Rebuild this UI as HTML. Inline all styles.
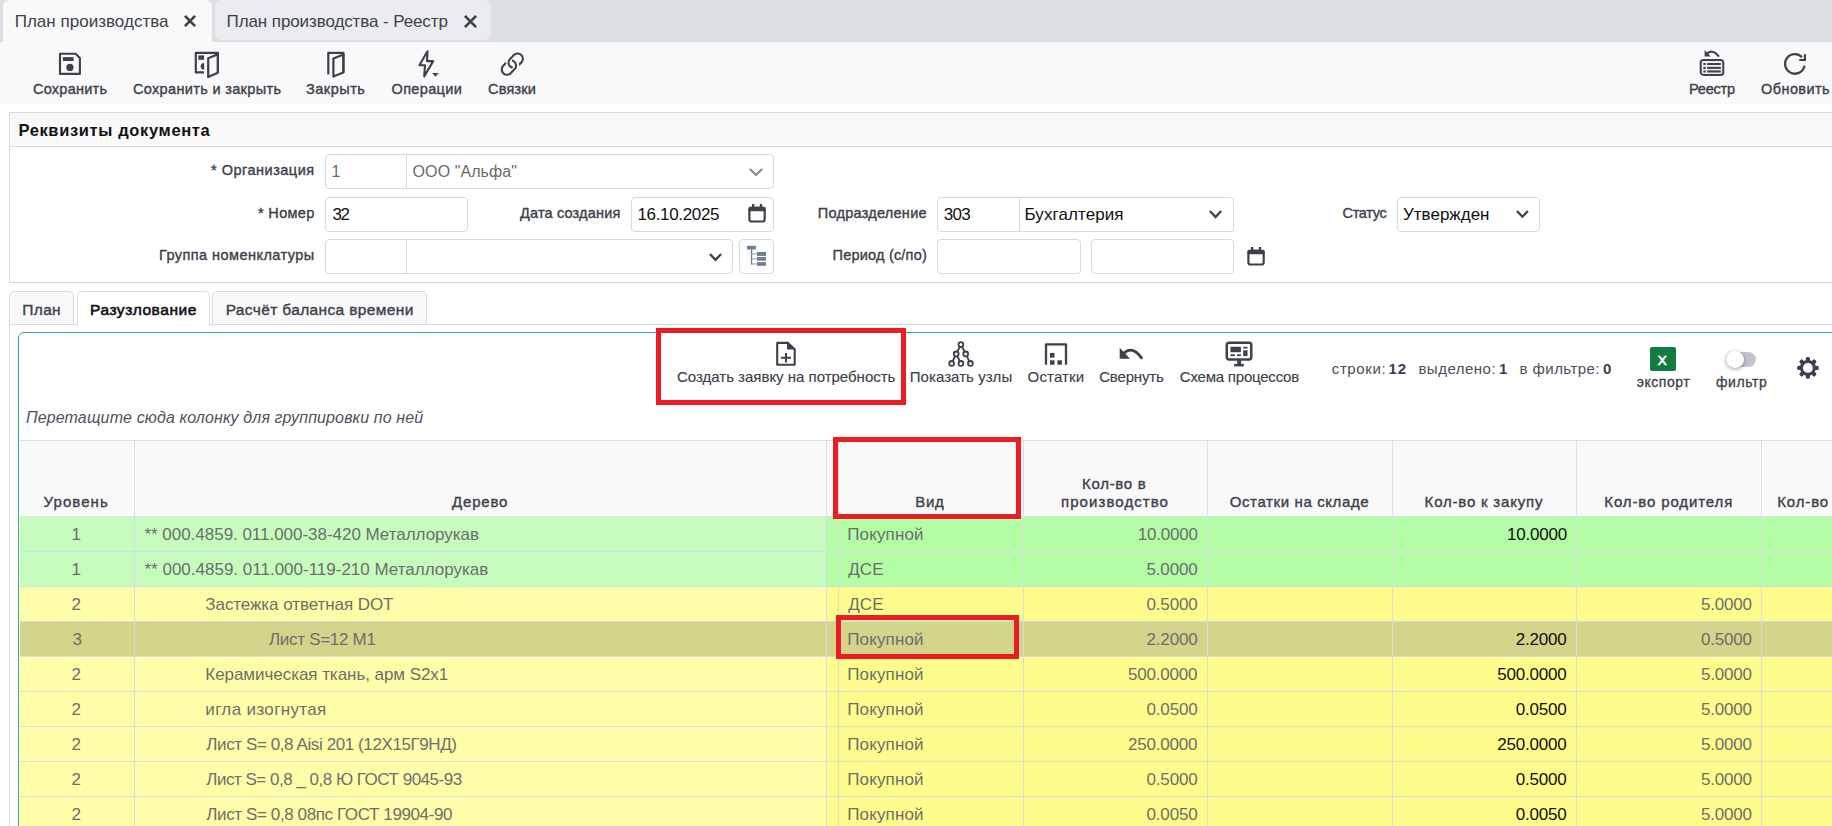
<!DOCTYPE html>
<html><head><meta charset="utf-8"><style>
html,body{margin:0;padding:0}
body{width:1832px;height:826px;overflow:hidden;position:relative;background:#fff;font-family:"Liberation Sans",sans-serif}
.t{position:absolute;white-space:nowrap}
svg{display:block}
</style></head><body>
<div style="position:absolute;left:0px;top:0px;width:1832px;height:42px;background:#dcdfe3"></div>
<div style="position:absolute;left:3px;top:0px;width:209px;height:42px;background:#f9f9f9;border-radius:6px 6px 0 0"></div>
<div class="t" style="left:14.70px;top:12.61px;font-size:17px;line-height:17px;font-weight:400;color:#3c414c;font-style:normal;letter-spacing:0.019px;">План производства</div>
<div style="position:absolute;left:215px;top:0px;width:276px;height:40px;background:#eaecf0;border-radius:6px"></div>
<div class="t" style="left:226.60px;top:12.61px;font-size:17px;line-height:17px;font-weight:400;color:#3c414c;font-style:normal;letter-spacing:-0.104px;">План производства - Реестр</div>
<svg style="position:absolute;left:182px;top:13px" width="16" height="16" viewBox="0 0 16 16"><path d="M2.9 2.9 L13.1 13.1 M13.1 2.9 L2.9 13.1" stroke="#3c414c" stroke-width="2.7" fill="none"/></svg>
<svg style="position:absolute;left:462px;top:13px" width="17" height="17" viewBox="0 0 17 17"><path d="M2.9 2.9 L14.1 14.1 M14.1 2.9 L2.9 14.1" stroke="#3c414c" stroke-width="2.7" fill="none"/></svg>
<div style="position:absolute;left:0px;top:42px;width:1832px;height:62px;background:#f9f9f9"></div>
<div class="t" style="left:33.00px;top:81.73px;font-size:14.5px;line-height:14.5px;font-weight:400;color:#3c414c;font-style:normal;letter-spacing:0.250px;-webkit-text-stroke:0.38px #3c414c;">Сохранить</div>
<div class="t" style="left:133.00px;top:81.73px;font-size:14.5px;line-height:14.5px;font-weight:400;color:#3c414c;font-style:normal;letter-spacing:0.333px;-webkit-text-stroke:0.38px #3c414c;">Сохранить и закрыть</div>
<div class="t" style="left:306.00px;top:81.73px;font-size:14.5px;line-height:14.5px;font-weight:400;color:#3c414c;font-style:normal;letter-spacing:0.500px;-webkit-text-stroke:0.38px #3c414c;">Закрыть</div>
<div class="t" style="left:391.50px;top:81.73px;font-size:14.5px;line-height:14.5px;font-weight:400;color:#3c414c;font-style:normal;letter-spacing:0.357px;-webkit-text-stroke:0.38px #3c414c;">Операции</div>
<div class="t" style="left:488.00px;top:81.73px;font-size:14.5px;line-height:14.5px;font-weight:400;color:#3c414c;font-style:normal;letter-spacing:0.200px;-webkit-text-stroke:0.38px #3c414c;">Связки</div>
<div class="t" style="left:1689.00px;top:81.73px;font-size:14.5px;line-height:14.5px;font-weight:400;color:#3c414c;font-style:normal;letter-spacing:-0.200px;-webkit-text-stroke:0.38px #3c414c;">Реестр</div>
<div class="t" style="left:1761.00px;top:81.73px;font-size:14.5px;line-height:14.5px;font-weight:400;color:#3c414c;font-style:normal;letter-spacing:0.429px;-webkit-text-stroke:0.38px #3c414c;">Обновить</div>
<svg style="position:absolute;left:54px;top:48px" width="32" height="32" viewBox="0 0 32 32"><path d="M6 5.8 H21.6 L25.9 10.1 V25.9 H6 Z" stroke="#3c414c" stroke-width="2.1" fill="none" stroke-linejoin="round"/><rect x="8.9" y="9.1" width="10.7" height="3.9" fill="#3c414c"/><circle cx="15.9" cy="19.4" r="3.6" fill="#3c414c"/></svg>
<svg style="position:absolute;left:190px;top:48px" width="32" height="32" viewBox="0 0 32 32"><path d="M14.1 24.4 H5.8 V4.8 H27.9 V24.8" stroke="#3c414c" stroke-width="2.2" fill="none" stroke-linejoin="round"/><path d="M18.2 29 V10.2 L27.9 6.2 V24.8 Z" stroke="#3c414c" stroke-width="2.2" fill="none" stroke-linejoin="round"/><rect x="8.3" y="7.4" width="5.8" height="4.4" fill="#3c414c"/><path d="M14.1 14.9 A3.4 3.4 0 0 0 14.1 21.7 Z" fill="#3c414c"/></svg>
<svg style="position:absolute;left:320px;top:48px" width="32" height="32" viewBox="0 0 32 32"><path d="M8.3 26.6 V4.8 H23.4 V24.4" stroke="#3c414c" stroke-width="2.2" fill="none" stroke-linejoin="round"/><path d="M13.4 28.6 V10.5 L23.4 6.4 V24.4 Z" stroke="#3c414c" stroke-width="2.2" fill="none" stroke-linejoin="round"/></svg>
<svg style="position:absolute;left:412px;top:48px" width="32" height="32" viewBox="0 0 32 32"><path d="M15.5 3.2 L7.4 17.2 H13 L12.2 28.4 L21.2 13.1 H15 Z" stroke="#3c414c" stroke-width="2.1" fill="none" stroke-linejoin="round"/><path d="M20.2 25 H26.7 L23.45 28.7 Z" fill="#3c414c"/></svg>
<svg style="position:absolute;left:496px;top:48px" width="32" height="32" viewBox="0 0 32 32"><g transform="translate(-0.52,0.37) scale(2.1)" fill="#3c414c"><path d="M4.715 6.542 3.343 7.914a3 3 0 1 0 4.243 4.243l1.828-1.829A3 3 0 0 0 8.586 5.5L8 6.086a1 1 0 0 0-.154.199 2 2 0 0 1 .861 3.337L6.88 11.45a2 2 0 1 1-2.83-2.83l.793-.792a4 4 0 0 1-.128-1.287z"/><path d="M6.586 4.672A3 3 0 0 0 7.414 9.5l.775-.776a2 2 0 0 1-.896-3.346L9.12 3.55a2 2 0 1 1 2.83 2.83l-.793.792c.112.42.155.855.128 1.287l1.372-1.372a3 3 0 1 0-4.243-4.243z"/><circle cx="4.7" cy="7.2" r="0.52"/><circle cx="8.293" cy="5.793" r="0.5"/><circle cx="7.8" cy="9.11" r="0.5"/><circle cx="11.95" cy="7.1" r="0.52"/></g></svg>
<svg style="position:absolute;left:1696px;top:46px" width="32" height="32" viewBox="0 0 32 32"><rect x="4.75" y="14.05" width="22.5" height="14.9" rx="2.8" stroke="#3c414c" stroke-width="2.1" fill="none"/><rect x="5.8" y="15.1" width="20.4" height="12.8" fill="#dfe0e3" opacity="0.55"/><g fill="#3c414c"><rect x="7.4" y="17" width="2.3" height="2"/><rect x="7.4" y="20.9" width="2.3" height="2"/><rect x="7.4" y="24.4" width="2.3" height="2.1"/><rect x="11.2" y="17" width="13.6" height="2"/><rect x="11.2" y="20.9" width="13.6" height="2"/><rect x="11.2" y="24.4" width="13.6" height="2.1"/><path d="M8.6 3.9 V10.5 H14.7 Z"/></g><path d="M10.5 8.2 Q16 2.5 22.4 9.9" stroke="#3c414c" stroke-width="2.2" fill="none" stroke-linecap="round"/></svg>
<svg style="position:absolute;left:1779px;top:48px" width="32" height="32" viewBox="0 0 32 32"><path d="M25.55 17.60 A9.8 9.8 0 1 1 22.95 9.09" stroke="#3c414c" stroke-width="2.3" fill="none"/><path d="M20.2 10.9 H24.8 V6.2 H27 V13.1 H20.2 Z" fill="#3c414c"/></svg>
<div style="position:absolute;left:9px;top:112px;width:1831px;height:171px;border:1px solid #d5d9e3;box-sizing:border-box;background:#fff"></div>
<div style="position:absolute;left:10px;top:113px;width:1830px;height:33px;background:#f9f9f9"></div>
<div style="position:absolute;left:10px;top:146px;width:1830px;height:1px;background:#d5d9e3"></div>
<div class="t" style="left:18.40px;top:121.63px;font-size:16.5px;line-height:16.5px;font-weight:700;color:#111;font-style:normal;letter-spacing:0.644px;">Реквизиты документа</div>
<div class="t" style="left:211.00px;top:162.93px;font-size:14.5px;line-height:14.5px;font-weight:400;color:#3c414c;font-style:normal;letter-spacing:0.500px;-webkit-text-stroke:0.38px #3c414c;">* Организация</div>
<div class="t" style="left:258.00px;top:205.83px;font-size:14.5px;line-height:14.5px;font-weight:400;color:#3c414c;font-style:normal;letter-spacing:0.333px;-webkit-text-stroke:0.38px #3c414c;">* Номер</div>
<div class="t" style="left:159.00px;top:247.73px;font-size:14.5px;line-height:14.5px;font-weight:400;color:#3c414c;font-style:normal;letter-spacing:0.444px;-webkit-text-stroke:0.38px #3c414c;">Группа номенклатуры</div>
<div class="t" style="left:520.00px;top:205.83px;font-size:14.5px;line-height:14.5px;font-weight:400;color:#3c414c;font-style:normal;letter-spacing:0.167px;-webkit-text-stroke:0.38px #3c414c;">Дата создания</div>
<div class="t" style="left:817.80px;top:205.83px;font-size:14.5px;line-height:14.5px;font-weight:400;color:#3c414c;font-style:normal;letter-spacing:0.258px;-webkit-text-stroke:0.38px #3c414c;">Подразделение</div>
<div class="t" style="left:832.60px;top:248.13px;font-size:14.5px;line-height:14.5px;font-weight:400;color:#3c414c;font-style:normal;letter-spacing:0.200px;-webkit-text-stroke:0.38px #3c414c;">Период (с/по)</div>
<div class="t" style="left:1342.50px;top:205.83px;font-size:14.5px;line-height:14.5px;font-weight:400;color:#3c414c;font-style:normal;letter-spacing:-0.300px;-webkit-text-stroke:0.38px #3c414c;">Статус</div>
<div style="position:absolute;left:325px;top:154px;width:449px;height:35px;border:1px solid #d5d9e3;border-radius:4px;box-sizing:border-box;background:#fff"></div><div style="position:absolute;left:406px;top:155px;width:1px;height:33px;background:#d5d9e3"></div>
<div class="t" style="left:331.50px;top:164.16px;font-size:16px;line-height:16px;font-weight:400;color:#6a6a6a;font-style:normal;letter-spacing:0.000px;">1</div>
<div class="t" style="left:412.60px;top:164.16px;font-size:16px;line-height:16px;font-weight:400;color:#6a6a6a;font-style:normal;letter-spacing:0.080px;">ООО "Альфа"</div>
<svg style="position:absolute;left:747px;top:166px" width="18" height="12" viewBox="0 0 18 12"><path d="M2.9 3 L9.0 8.8 L15.1 3" stroke="#8a8d93" stroke-width="2.3" fill="none"/></svg>
<div style="position:absolute;left:325px;top:197px;width:143px;height:35px;border:1px solid #d5d9e3;border-radius:4px;box-sizing:border-box;background:#fff"></div>
<div class="t" style="left:332.50px;top:205.61px;font-size:17px;line-height:17px;font-weight:400;color:#111;font-style:normal;letter-spacing:-1.500px;">32</div>
<div style="position:absolute;left:631px;top:197px;width:143px;height:35px;border:1px solid #d5d9e3;border-radius:4px;box-sizing:border-box;background:#fff"></div>
<div class="t" style="left:637.40px;top:205.61px;font-size:17px;line-height:17px;font-weight:400;color:#111;font-style:normal;letter-spacing:-0.322px;">16.10.2025</div>
<svg style="position:absolute;left:740px;top:198px" width="32" height="32" viewBox="0 0 32 32"><rect x="9.4" y="9.8" width="15.3" height="13.7" rx="2.3" stroke="#3c414c" stroke-width="2.2" fill="none"/><rect x="8.3" y="8.7" width="17.5" height="4.5" rx="2" fill="#3c414c"/><rect x="12" y="6" width="2.3" height="4" fill="#3c414c"/><rect x="19.8" y="6" width="2.3" height="4" fill="#3c414c"/></svg>
<div style="position:absolute;left:325px;top:239px;width:408px;height:35px;border:1px solid #d5d9e3;border-radius:4px;box-sizing:border-box;background:#fff"></div><div style="position:absolute;left:406px;top:240px;width:1px;height:33px;background:#d5d9e3"></div>
<svg style="position:absolute;left:706.6px;top:250.7px" width="17.0" height="12.100000000000023" viewBox="0 0 17.0 12.100000000000023"><path d="M2.9 3 L8.5 8.900000000000023 L14.1 3" stroke="#3c414c" stroke-width="2.3" fill="none"/></svg>
<div style="position:absolute;left:739px;top:239px;width:35px;height:35px;border:1px solid #d5d9e3;border-radius:4px;box-sizing:border-box;background:#fff"></div>
<svg style="position:absolute;left:740px;top:240px" width="32" height="32" viewBox="0 0 32 32"><g fill="#6b7f96"><rect x="7" y="5.8" width="8.9" height="3.7"/><rect x="10.9" y="9" width="1.3" height="15.6"/><rect x="12" y="13.3" width="5" height="1.2" opacity="0.6"/><rect x="12" y="18.3" width="5" height="1.2" opacity="0.6"/><rect x="12" y="23.3" width="5" height="1.3" opacity="0.6"/><rect x="17" y="12" width="9" height="3.9"/><rect x="17" y="17" width="9" height="3.7"/><rect x="17" y="22.1" width="9" height="3.7"/></g></svg>
<div style="position:absolute;left:937px;top:197px;width:297px;height:35px;border:1px solid #d5d9e3;border-radius:4px;box-sizing:border-box;background:#fff"></div><div style="position:absolute;left:1019px;top:198px;width:1px;height:33px;background:#d5d9e3"></div>
<div class="t" style="left:943.80px;top:205.61px;font-size:17px;line-height:17px;font-weight:400;color:#111;font-style:normal;letter-spacing:-0.750px;">303</div>
<div class="t" style="left:1024.50px;top:205.61px;font-size:17px;line-height:17px;font-weight:400;color:#111;font-style:normal;letter-spacing:0.080px;">Бухгалтерия</div>
<svg style="position:absolute;left:1206.5px;top:208px" width="17.09999999999991" height="12.199999999999989" viewBox="0 0 17.09999999999991 12.199999999999989"><path d="M2.9 3 L8.549999999999955 8.99999999999999 L14.199999999999909 3" stroke="#3c414c" stroke-width="2.3" fill="none"/></svg>
<div style="position:absolute;left:937px;top:239px;width:144px;height:35px;border:1px solid #d5d9e3;border-radius:4px;box-sizing:border-box;background:#fff"></div>
<div style="position:absolute;left:1091px;top:239px;width:143px;height:35px;border:1px solid #d5d9e3;border-radius:4px;box-sizing:border-box;background:#fff"></div>
<svg style="position:absolute;left:1239px;top:241px" width="32" height="32" viewBox="0 0 32 32"><rect x="9.4" y="9.8" width="15.3" height="13.7" rx="2.3" stroke="#3c414c" stroke-width="2.2" fill="none"/><rect x="8.3" y="8.7" width="17.5" height="4.5" rx="2" fill="#3c414c"/><rect x="12" y="6" width="2.3" height="4" fill="#3c414c"/><rect x="19.8" y="6" width="2.3" height="4" fill="#3c414c"/></svg>
<div style="position:absolute;left:1397px;top:197px;width:143px;height:35px;border:1px solid #d5d9e3;border-radius:4px;box-sizing:border-box;background:#fff"></div>
<div class="t" style="left:1403.00px;top:205.61px;font-size:17px;line-height:17px;font-weight:400;color:#111;font-style:normal;letter-spacing:0.000px;">Утвержден</div>
<svg style="position:absolute;left:1513.5px;top:208.3px" width="16.799999999999955" height="11.899999999999977" viewBox="0 0 16.799999999999955 11.899999999999977"><path d="M2.9 3 L8.399999999999977 8.699999999999978 L13.899999999999954 3" stroke="#3c414c" stroke-width="2.3" fill="none"/></svg>
<div style="position:absolute;left:9px;top:324px;width:1px;height:502px;background:#d5d9e3"></div>
<div style="position:absolute;left:9px;top:291px;width:65px;height:34px;border:1px solid #d5d9e3;border-radius:5px 5px 0 0;box-sizing:border-box;background:#f9f9f9"></div>
<div style="position:absolute;left:212px;top:291px;width:215px;height:34px;border:1px solid #d5d9e3;border-radius:5px 5px 0 0;box-sizing:border-box;background:#f9f9f9"></div>
<div style="position:absolute;left:9px;top:324px;width:1831px;height:1px;background:#d5d9e3"></div>
<div style="position:absolute;left:77px;top:291px;width:133px;height:35px;border:1px solid #d5d9e3;border-bottom:none;border-radius:5px 5px 0 0;box-sizing:border-box;background:#fff"></div>
<div class="t" style="left:22.30px;top:302.08px;font-size:15.5px;line-height:15.5px;font-weight:400;color:#3c414c;font-style:normal;letter-spacing:0.333px;-webkit-text-stroke:0.38px #3c414c;">План</div>
<div class="t" style="left:90.00px;top:302.48px;font-size:15.5px;line-height:15.5px;font-weight:400;color:#111;font-style:normal;letter-spacing:0.555px;-webkit-text-stroke:0.6px #111;">Разузлование</div>
<div class="t" style="left:225.70px;top:302.08px;font-size:15.5px;line-height:15.5px;font-weight:400;color:#3c414c;font-style:normal;letter-spacing:0.357px;-webkit-text-stroke:0.38px #3c414c;">Расчёт баланса времени</div>
<div style="position:absolute;left:18px;top:332px;width:1832px;height:568px;border:1.4px solid #2db36b;border-radius:6px;box-sizing:border-box;background:#fff"></div>
<div class="t" style="left:677.00px;top:369.30px;font-size:15px;line-height:15px;font-weight:400;color:#3c414c;font-style:normal;letter-spacing:-0.007px;-webkit-text-stroke:0.15px #3c414c;">Создать заявку на потребность</div>
<div class="t" style="left:909.70px;top:369.30px;font-size:15px;line-height:15px;font-weight:400;color:#3c414c;font-style:normal;letter-spacing:0.067px;-webkit-text-stroke:0.15px #3c414c;">Показать узлы</div>
<div class="t" style="left:1027.60px;top:369.30px;font-size:15px;line-height:15px;font-weight:400;color:#3c414c;font-style:normal;letter-spacing:0.150px;-webkit-text-stroke:0.15px #3c414c;">Остатки</div>
<div class="t" style="left:1099.20px;top:369.30px;font-size:15px;line-height:15px;font-weight:400;color:#3c414c;font-style:normal;letter-spacing:-0.171px;-webkit-text-stroke:0.15px #3c414c;">Свернуть</div>
<div class="t" style="left:1179.80px;top:369.30px;font-size:15px;line-height:15px;font-weight:400;color:#3c414c;font-style:normal;letter-spacing:-0.214px;-webkit-text-stroke:0.15px #3c414c;">Схема процессов</div>
<svg style="position:absolute;left:770px;top:338px" width="32" height="32" viewBox="0 0 32 32"><path d="M7.2 4.9 H18 L24.7 11.2 V26.7 H7.2 Z" stroke="#3c414c" stroke-width="2.1" fill="none" stroke-linejoin="round"/><path d="M17 4.5 L25.8 11.6 H17 Z" fill="#3c414c"/><path d="M16 14.9 V24.6 M11 19.7 H20.9" stroke="#3c414c" stroke-width="2.1"/></svg>
<svg style="position:absolute;left:944px;top:338px" width="32" height="32" viewBox="0 0 32 32"><path d="M15.82 8.74 L13.28 13.76" stroke="#3c414c" stroke-width="1.8"/><path d="M18.00 8.73 L20.60 13.77" stroke="#3c414c" stroke-width="1.8"/><path d="M11.15 18.06 L8.65 23.24" stroke="#3c414c" stroke-width="1.8"/><path d="M13.26 18.05 L15.84 23.25" stroke="#3c414c" stroke-width="1.8"/><path d="M22.76 18.05 L25.34 23.25" stroke="#3c414c" stroke-width="1.8"/><circle cx="16.9" cy="6.6" r="2.4" stroke="#3c414c" stroke-width="1.8" fill="none"/><circle cx="12.2" cy="15.9" r="2.4" stroke="#3c414c" stroke-width="1.8" fill="none"/><circle cx="21.7" cy="15.9" r="2.4" stroke="#3c414c" stroke-width="1.8" fill="none"/><circle cx="7.6" cy="25.4" r="2.4" stroke="#3c414c" stroke-width="1.8" fill="none"/><circle cx="16.9" cy="25.4" r="2.4" stroke="#3c414c" stroke-width="1.8" fill="none"/><circle cx="26.4" cy="25.4" r="2.4" stroke="#3c414c" stroke-width="1.8" fill="none"/></svg>
<svg style="position:absolute;left:1040px;top:338px" width="32" height="32" viewBox="0 0 32 32"><path d="M6 26.7 V6.4 H26 V26.7" stroke="#3c414c" stroke-width="2.3" fill="none" stroke-linejoin="round"/><g fill="#3c414c"><rect x="10" y="14.9" width="4.5" height="4.7"/><rect x="10" y="22.3" width="4.5" height="4.4"/><rect x="17.4" y="22.3" width="4.5" height="4.4"/></g></svg>
<svg style="position:absolute;left:1116px;top:338px" width="32" height="32" viewBox="0 0 32 32"><path d="M3.7 9.7 V20.7 H14 Z" fill="#3c414c"/><path d="M7.5 15.5 Q16 7 25.5 19.8" stroke="#3c414c" stroke-width="2.8" fill="none" stroke-linecap="round"/></svg>
<svg style="position:absolute;left:1222px;top:338px" width="34" height="34" viewBox="0 0 34 34"><rect x="4.75" y="4.75" width="24.5" height="16.8" rx="2.2" stroke="#3c414c" stroke-width="2.5" fill="none"/><g fill="#3c414c"><rect x="15.2" y="22" width="3.9" height="4.2"/><rect x="12.1" y="25.9" width="9.7" height="2.5"/><rect x="8.4" y="8.8" width="10.5" height="5.4"/><rect x="21.2" y="8.8" width="4.3" height="1.7"/><rect x="21.2" y="12.3" width="4.3" height="5.8"/><rect x="8.4" y="16.3" width="4.4" height="1.8"/><rect x="15" y="16.3" width="3.9" height="1.8"/></g></svg>
<div class="t" style="left:1331.80px;top:361.10px;font-size:15px;line-height:15px;font-weight:400;color:#4a4f59;font-style:normal;letter-spacing:0.600px;">строки:</div>
<div class="t" style="left:1388.60px;top:361.10px;font-size:15px;line-height:15px;font-weight:700;color:#3c414c;font-style:normal;letter-spacing:0.900px;">12</div>
<div class="t" style="left:1418.40px;top:361.10px;font-size:15px;line-height:15px;font-weight:400;color:#4a4f59;font-style:normal;letter-spacing:0.500px;">выделено:</div>
<div class="t" style="left:1499.00px;top:361.10px;font-size:15px;line-height:15px;font-weight:700;color:#3c414c;font-style:normal;letter-spacing:0.000px;">1</div>
<div class="t" style="left:1519.60px;top:361.10px;font-size:15px;line-height:15px;font-weight:400;color:#4a4f59;font-style:normal;letter-spacing:0.422px;">в фильтре:</div>
<div class="t" style="left:1603.00px;top:361.10px;font-size:15px;line-height:15px;font-weight:700;color:#3c414c;font-style:normal;letter-spacing:0.000px;">0</div>
<div style="position:absolute;left:1650px;top:346.5px;width:25.5px;height:24.69999999999999px;background:#107c41;border-radius:2px"></div>
<div class="t" style="left:1657.80px;top:353.57px;font-size:13.5px;line-height:13.5px;font-weight:400;color:#fff;font-style:normal;letter-spacing:0.000px;-webkit-text-stroke:0.7px #fff;">X</div>
<div class="t" style="left:1636.80px;top:375.45px;font-size:14px;line-height:14px;font-weight:400;color:#3c414c;font-style:normal;letter-spacing:0.533px;-webkit-text-stroke:0.3px #3c414c;">экспорт</div>
<div style="position:absolute;left:1726px;top:352px;width:30px;height:14.5px;background:#c2c5cb;border-radius:8px"></div>
<div style="position:absolute;left:1725.5px;top:350.6px;width:18.5px;height:17.399999999999977px;background:#fff;border-radius:50%;box-shadow:0 1px 4px rgba(0,0,0,0.4)"></div>
<div class="t" style="left:1716.00px;top:375.45px;font-size:14px;line-height:14px;font-weight:400;color:#3c414c;font-style:normal;letter-spacing:0.600px;-webkit-text-stroke:0.3px #3c414c;">фильтр</div>
<svg style="position:absolute;left:1792px;top:352px" width="32" height="32" viewBox="0 0 32 32"><g fill="#3c414c"><rect x="13.8" y="5.1" width="4.2" height="5" rx="1.6" transform="rotate(0 15.9 15.9)"/><rect x="13.8" y="5.1" width="4.2" height="5" rx="1.6" transform="rotate(45 15.9 15.9)"/><rect x="13.8" y="5.1" width="4.2" height="5" rx="1.6" transform="rotate(90 15.9 15.9)"/><rect x="13.8" y="5.1" width="4.2" height="5" rx="1.6" transform="rotate(135 15.9 15.9)"/><rect x="13.8" y="5.1" width="4.2" height="5" rx="1.6" transform="rotate(180 15.9 15.9)"/><rect x="13.8" y="5.1" width="4.2" height="5" rx="1.6" transform="rotate(225 15.9 15.9)"/><rect x="13.8" y="5.1" width="4.2" height="5" rx="1.6" transform="rotate(270 15.9 15.9)"/><rect x="13.8" y="5.1" width="4.2" height="5" rx="1.6" transform="rotate(315 15.9 15.9)"/></g><circle cx="15.9" cy="15.9" r="6.45" stroke="#3c414c" stroke-width="3" fill="none"/></svg>
<div class="t" style="left:26.00px;top:410.16px;font-size:16px;line-height:16px;font-weight:400;color:#4f535c;font-style:italic;letter-spacing:0.120px;">Перетащите сюда колонку для группировки по ней</div>
<div style="position:absolute;left:656px;top:328px;width:250px;height:77px;border:5px solid #ec1c24;box-sizing:border-box"></div>
<div style="position:absolute;left:19.5px;top:440px;width:1812.5px;height:76px;background:#f9f9f9"></div>
<div style="position:absolute;left:19.5px;top:440px;width:1812.5px;height:1px;background:#dcdfe8"></div>
<div style="position:absolute;left:19.5px;top:516px;width:1812.5px;height:1px;background:#dcdfe8"></div>
<div style="position:absolute;left:134.0px;top:441px;width:1.0px;height:75px;background:#dcdfe8"></div>
<div style="position:absolute;left:826.0px;top:441px;width:1.0px;height:75px;background:#dcdfe8"></div>
<div style="position:absolute;left:838.0px;top:441px;width:1.0px;height:75px;background:#dcdfe8"></div>
<div style="position:absolute;left:1023.0px;top:441px;width:1.0px;height:75px;background:#dcdfe8"></div>
<div style="position:absolute;left:1207.0px;top:441px;width:1.0px;height:75px;background:#dcdfe8"></div>
<div style="position:absolute;left:1392.0px;top:441px;width:1.0px;height:75px;background:#dcdfe8"></div>
<div style="position:absolute;left:1576.0px;top:441px;width:1.0px;height:75px;background:#dcdfe8"></div>
<div style="position:absolute;left:1761.0px;top:441px;width:1.0px;height:75px;background:#dcdfe8"></div>
<div class="t" style="left:43.60px;top:494.10px;font-size:15px;line-height:15px;font-weight:400;color:#3c414c;font-style:normal;letter-spacing:1.067px;-webkit-text-stroke:0.38px #3c414c;">Уровень</div>
<div class="t" style="left:452.00px;top:494.10px;font-size:15px;line-height:15px;font-weight:400;color:#3c414c;font-style:normal;letter-spacing:0.820px;-webkit-text-stroke:0.38px #3c414c;">Дерево</div>
<div class="t" style="left:915.30px;top:494.10px;font-size:15px;line-height:15px;font-weight:400;color:#3c414c;font-style:normal;letter-spacing:0.650px;-webkit-text-stroke:0.38px #3c414c;">Вид</div>
<div class="t" style="left:1082.00px;top:476.30px;font-size:15px;line-height:15px;font-weight:400;color:#3c414c;font-style:normal;letter-spacing:0.714px;-webkit-text-stroke:0.38px #3c414c;">Кол-во в</div>
<div class="t" style="left:1061.00px;top:494.10px;font-size:15px;line-height:15px;font-weight:400;color:#3c414c;font-style:normal;letter-spacing:1.073px;-webkit-text-stroke:0.38px #3c414c;">производство</div>
<div class="t" style="left:1229.70px;top:494.10px;font-size:15px;line-height:15px;font-weight:400;color:#3c414c;font-style:normal;letter-spacing:0.619px;-webkit-text-stroke:0.38px #3c414c;">Остатки на складе</div>
<div class="t" style="left:1424.60px;top:494.10px;font-size:15px;line-height:15px;font-weight:400;color:#3c414c;font-style:normal;letter-spacing:0.800px;-webkit-text-stroke:0.38px #3c414c;">Кол-во к закупу</div>
<div class="t" style="left:1604.30px;top:494.10px;font-size:15px;line-height:15px;font-weight:400;color:#3c414c;font-style:normal;letter-spacing:0.879px;-webkit-text-stroke:0.38px #3c414c;">Кол-во родителя</div>
<div class="t" style="left:1777.30px;top:494.10px;font-size:15px;line-height:15px;font-weight:400;color:#3c414c;font-style:normal;letter-spacing:0.840px;-webkit-text-stroke:0.38px #3c414c;">Кол-во</div>
<div style="position:absolute;left:19.5px;top:517px;width:807.0px;height:35px;background:#c6fcbe"></div>
<div style="position:absolute;left:826.5px;top:517px;width:1005.5px;height:35px;background:#b3fda6"></div>
<div style="position:absolute;left:19.5px;top:551px;width:1812.5px;height:1px;background:#d9dbe3"></div>
<div style="position:absolute;left:134.0px;top:517px;width:1.0px;height:34px;background:#d9dbe3"></div>
<div style="position:absolute;left:826.0px;top:517px;width:1.0px;height:34px;background:#d9dbe3"></div>
<div style="position:absolute;left:838.0px;top:517px;width:1.0px;height:34px;background:#d9dbe3"></div>
<div style="position:absolute;left:1023.0px;top:517px;width:1.0px;height:34px;background:#d9dbe3"></div>
<div style="position:absolute;left:1207.0px;top:517px;width:1.0px;height:34px;background:#d9dbe3"></div>
<div style="position:absolute;left:1392.0px;top:517px;width:1.0px;height:34px;background:#d9dbe3"></div>
<div style="position:absolute;left:1576.0px;top:517px;width:1.0px;height:34px;background:#d9dbe3"></div>
<div style="position:absolute;left:1761.0px;top:517px;width:1.0px;height:34px;background:#d9dbe3"></div>
<div class="t" style="left:71.50px;top:526.11px;font-size:17px;line-height:17px;font-weight:400;color:#6e6e6e;font-style:normal;letter-spacing:0.000px;">1</div>
<div class="t" style="left:144.50px;top:526.11px;font-size:17px;line-height:17px;font-weight:400;color:#6e6e6e;font-style:normal;letter-spacing:-0.028px;">** 000.4859. 011.000-38-420 Металлорукав</div>
<div class="t" style="left:847.20px;top:526.11px;font-size:17px;line-height:17px;font-weight:400;color:#6e6e6e;font-style:normal;letter-spacing:0.150px;">Покупной</div>
<div class="t" style="left:1137.80px;top:526.11px;font-size:17px;line-height:17px;font-weight:400;color:#6e6e6e;font-style:normal;letter-spacing:-0.200px;">10.0000</div>
<div class="t" style="left:1507.00px;top:526.11px;font-size:17px;line-height:17px;font-weight:400;color:#111;font-style:normal;letter-spacing:-0.200px;">10.0000</div>
<div style="position:absolute;left:19.5px;top:552px;width:807.0px;height:35px;background:#c6fcbe"></div>
<div style="position:absolute;left:826.5px;top:552px;width:1005.5px;height:35px;background:#b3fda6"></div>
<div style="position:absolute;left:19.5px;top:586px;width:1812.5px;height:1px;background:#d9dbe3"></div>
<div style="position:absolute;left:134.0px;top:552px;width:1.0px;height:34px;background:#d9dbe3"></div>
<div style="position:absolute;left:826.0px;top:552px;width:1.0px;height:34px;background:#d9dbe3"></div>
<div style="position:absolute;left:838.0px;top:552px;width:1.0px;height:34px;background:#d9dbe3"></div>
<div style="position:absolute;left:1023.0px;top:552px;width:1.0px;height:34px;background:#d9dbe3"></div>
<div style="position:absolute;left:1207.0px;top:552px;width:1.0px;height:34px;background:#d9dbe3"></div>
<div style="position:absolute;left:1392.0px;top:552px;width:1.0px;height:34px;background:#d9dbe3"></div>
<div style="position:absolute;left:1576.0px;top:552px;width:1.0px;height:34px;background:#d9dbe3"></div>
<div style="position:absolute;left:1761.0px;top:552px;width:1.0px;height:34px;background:#d9dbe3"></div>
<div class="t" style="left:71.50px;top:561.11px;font-size:17px;line-height:17px;font-weight:400;color:#6e6e6e;font-style:normal;letter-spacing:0.000px;">1</div>
<div class="t" style="left:144.50px;top:561.11px;font-size:17px;line-height:17px;font-weight:400;color:#6e6e6e;font-style:normal;letter-spacing:0.000px;">** 000.4859. 011.000-119-210 Металлорукав</div>
<div class="t" style="left:848.20px;top:561.11px;font-size:17px;line-height:17px;font-weight:400;color:#6e6e6e;font-style:normal;letter-spacing:0.150px;">ДСЕ</div>
<div class="t" style="left:1146.60px;top:561.11px;font-size:17px;line-height:17px;font-weight:400;color:#6e6e6e;font-style:normal;letter-spacing:-0.200px;">5.0000</div>
<div style="position:absolute;left:19.5px;top:587px;width:807.0px;height:35px;background:#fefea8"></div>
<div style="position:absolute;left:826.5px;top:587px;width:1005.5px;height:35px;background:#fefd8c"></div>
<div style="position:absolute;left:19.5px;top:621px;width:1812.5px;height:1px;background:#d9dbe3"></div>
<div style="position:absolute;left:134.0px;top:587px;width:1.0px;height:34px;background:#d9dbe3"></div>
<div style="position:absolute;left:826.0px;top:587px;width:1.0px;height:34px;background:#d9dbe3"></div>
<div style="position:absolute;left:838.0px;top:587px;width:1.0px;height:34px;background:#d9dbe3"></div>
<div style="position:absolute;left:1023.0px;top:587px;width:1.0px;height:34px;background:#d9dbe3"></div>
<div style="position:absolute;left:1207.0px;top:587px;width:1.0px;height:34px;background:#d9dbe3"></div>
<div style="position:absolute;left:1392.0px;top:587px;width:1.0px;height:34px;background:#d9dbe3"></div>
<div style="position:absolute;left:1576.0px;top:587px;width:1.0px;height:34px;background:#d9dbe3"></div>
<div style="position:absolute;left:1761.0px;top:587px;width:1.0px;height:34px;background:#d9dbe3"></div>
<div class="t" style="left:71.50px;top:596.11px;font-size:17px;line-height:17px;font-weight:400;color:#6e6e6e;font-style:normal;letter-spacing:0.000px;">2</div>
<div class="t" style="left:205.30px;top:596.11px;font-size:17px;line-height:17px;font-weight:400;color:#6e6e6e;font-style:normal;letter-spacing:-0.065px;">Застежка ответная DOT</div>
<div class="t" style="left:848.20px;top:596.11px;font-size:17px;line-height:17px;font-weight:400;color:#6e6e6e;font-style:normal;letter-spacing:0.150px;">ДСЕ</div>
<div class="t" style="left:1146.60px;top:596.11px;font-size:17px;line-height:17px;font-weight:400;color:#6e6e6e;font-style:normal;letter-spacing:-0.200px;">0.5000</div>
<div class="t" style="left:1701.00px;top:596.11px;font-size:17px;line-height:17px;font-weight:400;color:#6e6e6e;font-style:normal;letter-spacing:-0.200px;">5.0000</div>
<div style="position:absolute;left:19.5px;top:622px;width:807.0px;height:35px;background:#d4d48a"></div>
<div style="position:absolute;left:826.5px;top:622px;width:1005.5px;height:35px;background:#d4d48a"></div>
<div style="position:absolute;left:19.5px;top:656px;width:1812.5px;height:1px;background:#d9dbe3"></div>
<div style="position:absolute;left:134.0px;top:622px;width:1.0px;height:34px;background:#d9dbe3"></div>
<div style="position:absolute;left:826.0px;top:622px;width:1.0px;height:34px;background:#d9dbe3"></div>
<div style="position:absolute;left:838.0px;top:622px;width:1.0px;height:34px;background:#d9dbe3"></div>
<div style="position:absolute;left:1023.0px;top:622px;width:1.0px;height:34px;background:#d9dbe3"></div>
<div style="position:absolute;left:1207.0px;top:622px;width:1.0px;height:34px;background:#d9dbe3"></div>
<div style="position:absolute;left:1392.0px;top:622px;width:1.0px;height:34px;background:#d9dbe3"></div>
<div style="position:absolute;left:1576.0px;top:622px;width:1.0px;height:34px;background:#d9dbe3"></div>
<div style="position:absolute;left:1761.0px;top:622px;width:1.0px;height:34px;background:#d9dbe3"></div>
<div class="t" style="left:72.50px;top:631.11px;font-size:17px;line-height:17px;font-weight:400;color:#6e6e6e;font-style:normal;letter-spacing:0.000px;">3</div>
<div class="t" style="left:269.00px;top:631.11px;font-size:17px;line-height:17px;font-weight:400;color:#6e6e6e;font-style:normal;letter-spacing:-0.300px;">Лист S=12 M1</div>
<div class="t" style="left:847.20px;top:631.11px;font-size:17px;line-height:17px;font-weight:400;color:#6e6e6e;font-style:normal;letter-spacing:0.150px;">Покупной</div>
<div class="t" style="left:1146.60px;top:631.11px;font-size:17px;line-height:17px;font-weight:400;color:#6e6e6e;font-style:normal;letter-spacing:-0.200px;">2.2000</div>
<div class="t" style="left:1515.80px;top:631.11px;font-size:17px;line-height:17px;font-weight:400;color:#111;font-style:normal;letter-spacing:-0.200px;">2.2000</div>
<div class="t" style="left:1701.00px;top:631.11px;font-size:17px;line-height:17px;font-weight:400;color:#6e6e6e;font-style:normal;letter-spacing:-0.200px;">0.5000</div>
<div style="position:absolute;left:19.5px;top:657px;width:807.0px;height:35px;background:#fefea8"></div>
<div style="position:absolute;left:826.5px;top:657px;width:1005.5px;height:35px;background:#fefd8c"></div>
<div style="position:absolute;left:19.5px;top:691px;width:1812.5px;height:1px;background:#d9dbe3"></div>
<div style="position:absolute;left:134.0px;top:657px;width:1.0px;height:34px;background:#d9dbe3"></div>
<div style="position:absolute;left:826.0px;top:657px;width:1.0px;height:34px;background:#d9dbe3"></div>
<div style="position:absolute;left:838.0px;top:657px;width:1.0px;height:34px;background:#d9dbe3"></div>
<div style="position:absolute;left:1023.0px;top:657px;width:1.0px;height:34px;background:#d9dbe3"></div>
<div style="position:absolute;left:1207.0px;top:657px;width:1.0px;height:34px;background:#d9dbe3"></div>
<div style="position:absolute;left:1392.0px;top:657px;width:1.0px;height:34px;background:#d9dbe3"></div>
<div style="position:absolute;left:1576.0px;top:657px;width:1.0px;height:34px;background:#d9dbe3"></div>
<div style="position:absolute;left:1761.0px;top:657px;width:1.0px;height:34px;background:#d9dbe3"></div>
<div class="t" style="left:71.50px;top:666.11px;font-size:17px;line-height:17px;font-weight:400;color:#6e6e6e;font-style:normal;letter-spacing:0.000px;">2</div>
<div class="t" style="left:205.30px;top:666.11px;font-size:17px;line-height:17px;font-weight:400;color:#6e6e6e;font-style:normal;letter-spacing:-0.048px;">Керамическая ткань, арм S2x1</div>
<div class="t" style="left:847.20px;top:666.11px;font-size:17px;line-height:17px;font-weight:400;color:#6e6e6e;font-style:normal;letter-spacing:0.150px;">Покупной</div>
<div class="t" style="left:1128.00px;top:666.11px;font-size:17px;line-height:17px;font-weight:400;color:#6e6e6e;font-style:normal;letter-spacing:-0.200px;">500.0000</div>
<div class="t" style="left:1497.20px;top:666.11px;font-size:17px;line-height:17px;font-weight:400;color:#111;font-style:normal;letter-spacing:-0.200px;">500.0000</div>
<div class="t" style="left:1701.00px;top:666.11px;font-size:17px;line-height:17px;font-weight:400;color:#6e6e6e;font-style:normal;letter-spacing:-0.200px;">5.0000</div>
<div style="position:absolute;left:19.5px;top:692px;width:807.0px;height:35px;background:#fefea8"></div>
<div style="position:absolute;left:826.5px;top:692px;width:1005.5px;height:35px;background:#fefd8c"></div>
<div style="position:absolute;left:19.5px;top:726px;width:1812.5px;height:1px;background:#d9dbe3"></div>
<div style="position:absolute;left:134.0px;top:692px;width:1.0px;height:34px;background:#d9dbe3"></div>
<div style="position:absolute;left:826.0px;top:692px;width:1.0px;height:34px;background:#d9dbe3"></div>
<div style="position:absolute;left:838.0px;top:692px;width:1.0px;height:34px;background:#d9dbe3"></div>
<div style="position:absolute;left:1023.0px;top:692px;width:1.0px;height:34px;background:#d9dbe3"></div>
<div style="position:absolute;left:1207.0px;top:692px;width:1.0px;height:34px;background:#d9dbe3"></div>
<div style="position:absolute;left:1392.0px;top:692px;width:1.0px;height:34px;background:#d9dbe3"></div>
<div style="position:absolute;left:1576.0px;top:692px;width:1.0px;height:34px;background:#d9dbe3"></div>
<div style="position:absolute;left:1761.0px;top:692px;width:1.0px;height:34px;background:#d9dbe3"></div>
<div class="t" style="left:71.50px;top:701.11px;font-size:17px;line-height:17px;font-weight:400;color:#6e6e6e;font-style:normal;letter-spacing:0.000px;">2</div>
<div class="t" style="left:205.30px;top:701.11px;font-size:17px;line-height:17px;font-weight:400;color:#6e6e6e;font-style:normal;letter-spacing:0.362px;">игла изогнутая</div>
<div class="t" style="left:847.20px;top:701.11px;font-size:17px;line-height:17px;font-weight:400;color:#6e6e6e;font-style:normal;letter-spacing:0.150px;">Покупной</div>
<div class="t" style="left:1146.60px;top:701.11px;font-size:17px;line-height:17px;font-weight:400;color:#6e6e6e;font-style:normal;letter-spacing:-0.200px;">0.0500</div>
<div class="t" style="left:1515.80px;top:701.11px;font-size:17px;line-height:17px;font-weight:400;color:#111;font-style:normal;letter-spacing:-0.200px;">0.0500</div>
<div class="t" style="left:1701.00px;top:701.11px;font-size:17px;line-height:17px;font-weight:400;color:#6e6e6e;font-style:normal;letter-spacing:-0.200px;">5.0000</div>
<div style="position:absolute;left:19.5px;top:727px;width:807.0px;height:35px;background:#fefea8"></div>
<div style="position:absolute;left:826.5px;top:727px;width:1005.5px;height:35px;background:#fefd8c"></div>
<div style="position:absolute;left:19.5px;top:761px;width:1812.5px;height:1px;background:#d9dbe3"></div>
<div style="position:absolute;left:134.0px;top:727px;width:1.0px;height:34px;background:#d9dbe3"></div>
<div style="position:absolute;left:826.0px;top:727px;width:1.0px;height:34px;background:#d9dbe3"></div>
<div style="position:absolute;left:838.0px;top:727px;width:1.0px;height:34px;background:#d9dbe3"></div>
<div style="position:absolute;left:1023.0px;top:727px;width:1.0px;height:34px;background:#d9dbe3"></div>
<div style="position:absolute;left:1207.0px;top:727px;width:1.0px;height:34px;background:#d9dbe3"></div>
<div style="position:absolute;left:1392.0px;top:727px;width:1.0px;height:34px;background:#d9dbe3"></div>
<div style="position:absolute;left:1576.0px;top:727px;width:1.0px;height:34px;background:#d9dbe3"></div>
<div style="position:absolute;left:1761.0px;top:727px;width:1.0px;height:34px;background:#d9dbe3"></div>
<div class="t" style="left:71.50px;top:736.11px;font-size:17px;line-height:17px;font-weight:400;color:#6e6e6e;font-style:normal;letter-spacing:0.000px;">2</div>
<div class="t" style="left:206.30px;top:736.11px;font-size:17px;line-height:17px;font-weight:400;color:#6e6e6e;font-style:normal;letter-spacing:-0.403px;">Лист S= 0,8 Aisi 201 (12Х15Г9НД)</div>
<div class="t" style="left:847.20px;top:736.11px;font-size:17px;line-height:17px;font-weight:400;color:#6e6e6e;font-style:normal;letter-spacing:0.150px;">Покупной</div>
<div class="t" style="left:1128.00px;top:736.11px;font-size:17px;line-height:17px;font-weight:400;color:#6e6e6e;font-style:normal;letter-spacing:-0.200px;">250.0000</div>
<div class="t" style="left:1497.20px;top:736.11px;font-size:17px;line-height:17px;font-weight:400;color:#111;font-style:normal;letter-spacing:-0.200px;">250.0000</div>
<div class="t" style="left:1701.00px;top:736.11px;font-size:17px;line-height:17px;font-weight:400;color:#6e6e6e;font-style:normal;letter-spacing:-0.200px;">5.0000</div>
<div style="position:absolute;left:19.5px;top:762px;width:807.0px;height:35px;background:#fefea8"></div>
<div style="position:absolute;left:826.5px;top:762px;width:1005.5px;height:35px;background:#fefd8c"></div>
<div style="position:absolute;left:19.5px;top:796px;width:1812.5px;height:1px;background:#d9dbe3"></div>
<div style="position:absolute;left:134.0px;top:762px;width:1.0px;height:34px;background:#d9dbe3"></div>
<div style="position:absolute;left:826.0px;top:762px;width:1.0px;height:34px;background:#d9dbe3"></div>
<div style="position:absolute;left:838.0px;top:762px;width:1.0px;height:34px;background:#d9dbe3"></div>
<div style="position:absolute;left:1023.0px;top:762px;width:1.0px;height:34px;background:#d9dbe3"></div>
<div style="position:absolute;left:1207.0px;top:762px;width:1.0px;height:34px;background:#d9dbe3"></div>
<div style="position:absolute;left:1392.0px;top:762px;width:1.0px;height:34px;background:#d9dbe3"></div>
<div style="position:absolute;left:1576.0px;top:762px;width:1.0px;height:34px;background:#d9dbe3"></div>
<div style="position:absolute;left:1761.0px;top:762px;width:1.0px;height:34px;background:#d9dbe3"></div>
<div class="t" style="left:71.50px;top:771.11px;font-size:17px;line-height:17px;font-weight:400;color:#6e6e6e;font-style:normal;letter-spacing:0.000px;">2</div>
<div class="t" style="left:206.30px;top:771.11px;font-size:17px;line-height:17px;font-weight:400;color:#6e6e6e;font-style:normal;letter-spacing:-0.494px;">Лист S= 0,8 _ 0,8 Ю ГОСТ 9045-93</div>
<div class="t" style="left:847.20px;top:771.11px;font-size:17px;line-height:17px;font-weight:400;color:#6e6e6e;font-style:normal;letter-spacing:0.150px;">Покупной</div>
<div class="t" style="left:1146.60px;top:771.11px;font-size:17px;line-height:17px;font-weight:400;color:#6e6e6e;font-style:normal;letter-spacing:-0.200px;">0.5000</div>
<div class="t" style="left:1515.80px;top:771.11px;font-size:17px;line-height:17px;font-weight:400;color:#111;font-style:normal;letter-spacing:-0.200px;">0.5000</div>
<div class="t" style="left:1701.00px;top:771.11px;font-size:17px;line-height:17px;font-weight:400;color:#6e6e6e;font-style:normal;letter-spacing:-0.200px;">5.0000</div>
<div style="position:absolute;left:19.5px;top:797px;width:807.0px;height:35px;background:#fefea8"></div>
<div style="position:absolute;left:826.5px;top:797px;width:1005.5px;height:35px;background:#fefd8c"></div>
<div style="position:absolute;left:19.5px;top:831px;width:1812.5px;height:1px;background:#d9dbe3"></div>
<div style="position:absolute;left:134.0px;top:797px;width:1.0px;height:34px;background:#d9dbe3"></div>
<div style="position:absolute;left:826.0px;top:797px;width:1.0px;height:34px;background:#d9dbe3"></div>
<div style="position:absolute;left:838.0px;top:797px;width:1.0px;height:34px;background:#d9dbe3"></div>
<div style="position:absolute;left:1023.0px;top:797px;width:1.0px;height:34px;background:#d9dbe3"></div>
<div style="position:absolute;left:1207.0px;top:797px;width:1.0px;height:34px;background:#d9dbe3"></div>
<div style="position:absolute;left:1392.0px;top:797px;width:1.0px;height:34px;background:#d9dbe3"></div>
<div style="position:absolute;left:1576.0px;top:797px;width:1.0px;height:34px;background:#d9dbe3"></div>
<div style="position:absolute;left:1761.0px;top:797px;width:1.0px;height:34px;background:#d9dbe3"></div>
<div class="t" style="left:71.50px;top:806.11px;font-size:17px;line-height:17px;font-weight:400;color:#6e6e6e;font-style:normal;letter-spacing:0.000px;">2</div>
<div class="t" style="left:206.30px;top:806.11px;font-size:17px;line-height:17px;font-weight:400;color:#6e6e6e;font-style:normal;letter-spacing:-0.390px;">Лист S= 0,8 08пс ГОСТ 19904-90</div>
<div class="t" style="left:847.20px;top:806.11px;font-size:17px;line-height:17px;font-weight:400;color:#6e6e6e;font-style:normal;letter-spacing:0.150px;">Покупной</div>
<div class="t" style="left:1146.60px;top:806.11px;font-size:17px;line-height:17px;font-weight:400;color:#6e6e6e;font-style:normal;letter-spacing:-0.200px;">0.0050</div>
<div class="t" style="left:1515.80px;top:806.11px;font-size:17px;line-height:17px;font-weight:400;color:#111;font-style:normal;letter-spacing:-0.200px;">0.0050</div>
<div class="t" style="left:1701.00px;top:806.11px;font-size:17px;line-height:17px;font-weight:400;color:#6e6e6e;font-style:normal;letter-spacing:-0.200px;">5.0000</div>
<div style="position:absolute;left:833px;top:437px;width:188px;height:82px;border:5px solid #ec1c24;box-sizing:border-box"></div>
<div style="position:absolute;left:836px;top:615px;width:183px;height:44px;border:5px solid #ec1c24;box-sizing:border-box"></div>
</body></html>
